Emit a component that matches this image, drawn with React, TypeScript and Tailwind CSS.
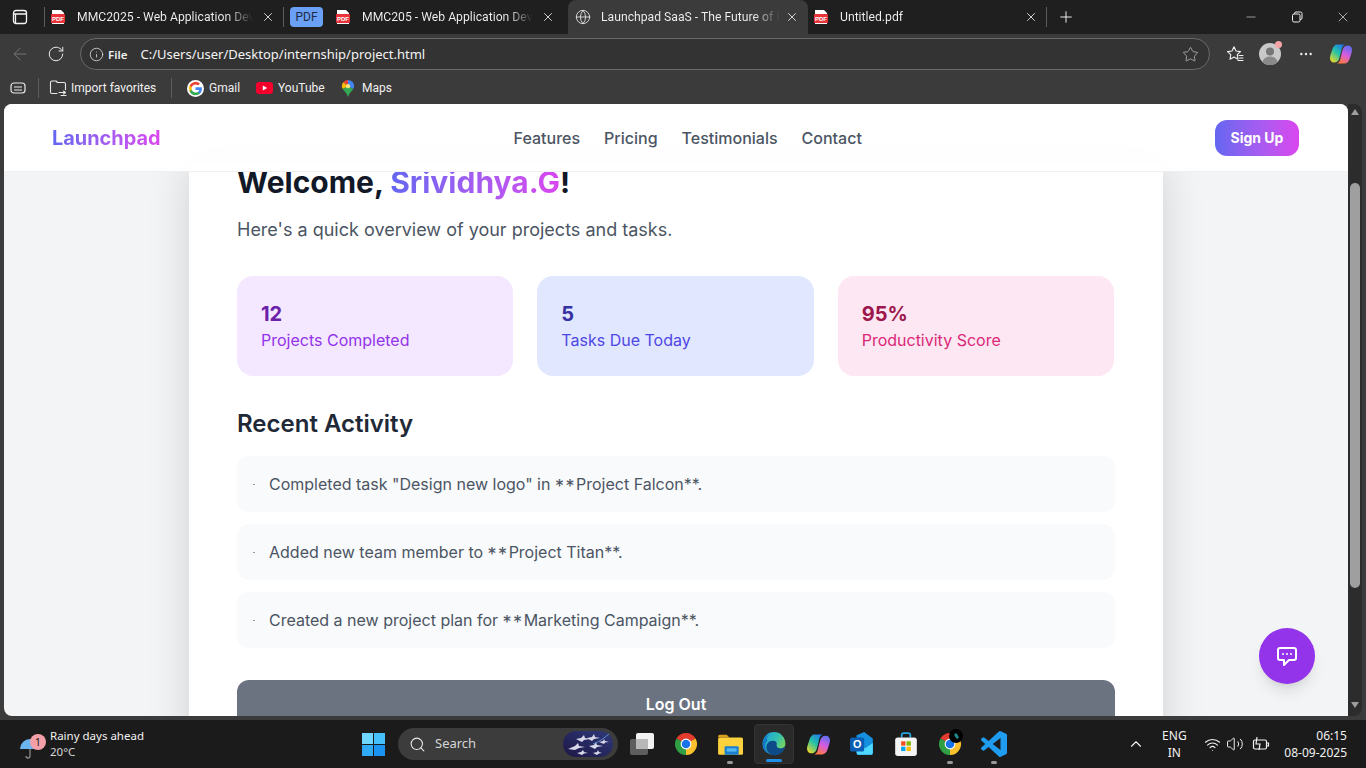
import React from 'react'
import { ArrowLeft, ChevronUp, Globe, Info, Minus, MoreHorizontal, Plus, RotateCw, Search, Star, Volume2, Wifi, X } from 'lucide-react'

const PdfIcon = () => (
  <svg width="16" height="16" viewBox="0 0 16 16" className="shrink-0">
    <path d="M2 1h9l3 3v11H2z" fill="#fff" />
    <rect x="1" y="5" width="14" height="9" rx="1" fill="#e8333a" />
    <text x="8" y="12" fontSize="6" fontWeight="700" textAnchor="middle" fill="#fff" fontFamily="Liberation Sans, sans-serif">PDF</text>
  </svg>
)

const Chrome = ({ size = 24 }: { size?: number }) => (
  <svg width={size} height={size} viewBox="0 0 24 24">
    <path d="M2.47 6.5A11 11 0 0 1 21.53 6.5L12 12Z" fill="#e33b2e" />
    <path d="M21.53 6.5A11 11 0 0 1 12 23L12 12Z" fill="#fbc02d" />
    <path d="M12 23A11 11 0 0 1 2.47 6.5L12 12Z" fill="#2f9e44" />
    <circle cx="12" cy="12" r="5.4" fill="#fff" />
    <circle cx="12" cy="12" r="4.3" fill="#1a73e8" />
  </svg>
)

const CopilotIcon = ({ size = 24 }: { size?: number }) => (
  <svg width={size} height={size} viewBox="0 0 24 24">
    <defs>
      <linearGradient id={`cpa${size}`} x1="0.9" y1="0" x2="0.2" y2="1">
        <stop offset="0" stopColor="#1f6ff0" />
        <stop offset="0.5" stopColor="#25c2a8" />
        <stop offset="1" stopColor="#e6d92a" />
      </linearGradient>
      <linearGradient id={`cpb${size}`} x1="0.7" y1="0" x2="0.3" y2="1">
        <stop offset="0" stopColor="#5f6df2" />
        <stop offset="0.5" stopColor="#d65ce0" />
        <stop offset="1" stopColor="#ff7a3c" />
      </linearGradient>
    </defs>
    <path d="M8 2.500h8c-1.800.6-2.800 2.200-3.300 4.200l-1 4.300-1.500 5.500c-.7 2.500-2.500 4-5.200 4C2.500 20.500 1 18.500 1 16c0-1 .3-2.500.8-4l1.500-4.500C4.300 4.500 6 2.500 8 2.500z" fill={`url(#cpa${size})`} />
    <path d="M16 21.500H8c1.800-.6 2.800-2.200 3.300-4.200l1-4.300 1.500-5.500c.7-2.500 2.500-4 5.200-4 2.500 0 4 2 4 4.500 0 1-.3 2.500-.8 4l-1.500 4.500c-1 3-2.700 5-5.200 5z" fill={`url(#cpb${size})`} />
  </svg>
)

const EdgeIcon = () => (
  <svg width="26" height="26" viewBox="0 0 24 24">
    <defs>
      <linearGradient id="edgeg" x1="0" y1="0" x2="1" y2="0.6">
        <stop offset="0" stopColor="#1b9de2" />
        <stop offset="0.6" stopColor="#35c1b0" />
        <stop offset="1" stopColor="#7ed957" />
      </linearGradient>
    </defs>
    <circle cx="12" cy="11.5" r="10.500" fill="url(#edgeg)" />
    <path d="M22.500 13c-.4 2-3 3.500-5.500 3-2.500-.5-3-2.500-2.500-4 .4-1.500-1-3-3.500-3-4 0-6.500 3-6 7 .4 3 3 6.500 7.500 6.500 5.500 0 9.500-4.500 10-9.500z" fill="#0c4a8a" />
    <path d="M6 9C3 11 3 17 7 20.500c-3.500-1-6-4.500-5.500-9C2 7 5 3.500 9 3 5.500 4 4.500 7 6 9z" fill="#1478c8" />
  </svg>
)

const Outlook = () => (
  <svg width="26" height="26" viewBox="0 0 24 24">
    <path d="M7 4l7-3 8 6v13a2 2 0 0 1-2 2H9a2 2 0 0 1-2-2z" fill="#1490df" />
    <path d="M7 12l8 4 7-5v9a2 2 0 0 1-2 2H9a2 2 0 0 1-2-2z" fill="#50d9ff" />
    <rect x="1" y="6" width="13" height="13" rx="1.500" fill="#0a5fb4" />
    <text x="7.500" y="16" fontSize="10" fontWeight="700" textAnchor="middle" fill="#fff" fontFamily="Liberation Sans, sans-serif">O</text>
  </svg>
)

const StoreIcon = () => (
  <svg width="26" height="26" viewBox="0 0 24 24">
    <path d="M8 6V4a2 2 0 0 1 2-2h4a2 2 0 0 1 2 2v2" fill="none" stroke="#26a5e4" strokeWidth="1.600" />
    <rect x="2" y="6" width="20" height="17" rx="2.500" fill="#f4f4f4" />
    <rect x="7.500" y="9.500" width="4" height="4" fill="#f25022" />
    <rect x="12.500" y="9.500" width="4" height="4" fill="#7fba00" />
    <rect x="7.500" y="14.500" width="4" height="4" fill="#00a4ef" />
    <rect x="12.500" y="14.500" width="4" height="4" fill="#ffb900" />
  </svg>
)

const FolderIcon = () => (
  <svg width="26" height="26" viewBox="0 0 24 24">
    <path d="M1 5a1.500 1.500 0 0 1 1.500-1.500H9l2.500 2.500H1z" fill="#d99e1a" />
    <rect x="1" y="6" width="23" height="16" rx="1.500" fill="#fbd13d" />
    <rect x="7" y="14" width="13" height="8" rx="1" fill="#1a7fd0" />
    <rect x="9" y="16" width="9" height="3" fill="#56b8f0" />
  </svg>
)

const VsCode = () => (
  <svg width="26" height="26" viewBox="0 0 24 24">
    <path fill="#1f9cf0" d="M23.150 2.587L18.210.21a1.494 1.494 0 0 0-1.705.29l-9.460 8.630-4.120-3.128a.999.999 0 0 0-1.276.057L.327 7.261A1 1 0 0 0 .326 8.740L3.899 12 .326 15.260a1 1 0 0 0 .001 1.479L1.650 17.940a.999.999 0 0 0 1.276.057l4.120-3.128 9.460 8.630a1.492 1.492 0 0 0 1.704.29l4.942-2.377A1.500 1.500 0 0 0 24 20.060V3.939a1.500 1.500 0 0 0-.85-1.352zm-5.146 14.861L10.826 12l7.178-5.448v10.896z" />
  </svg>
)

const TabItem = ({ title, width, closeClass, active, icon }: { title: string; width: number; closeClass: string; active?: boolean; icon: React.ReactNode }) => (
  <div className={`flex h-full shrink-0 items-center ${active ? 'rounded-t-lg bg-[#3b3b3b]' : ''}`} style={{ width }}>
    <div className={`flex shrink-0 ${active ? 'w-[33px] pl-[7px]' : 'w-[32px] pl-[5px]'}`}>{icon}</div>
    <span className="flex-1 overflow-hidden whitespace-nowrap bg-linear-to-r from-[#f2f2f2] from-85% to-transparent bg-clip-text text-transparent">{title}</span>
    <X size={14} strokeWidth={1.500} className={`shrink-0 text-[#e8e8e8] ${closeClass}`} />
  </div>
)

const Sep = () => <div className="h-[20px] w-px shrink-0 bg-[#5c5c5c]" />

const TabStrip = () => (
  <div className="flex h-[34px] shrink-0 items-center bg-[#1f1f1f] text-[12.200px] text-[#f2f2f2] [font-family:Roboto,sans-serif]">
    <div className="flex w-[40px] shrink-0 justify-center">
      <svg width="16" height="16" viewBox="0 0 16 16" fill="none" stroke="#f5f5f5" strokeWidth="1.300">
        <rect x="1.500" y="1.500" width="13" height="13" rx="2.500" />
        <path d="M1.500 5h13M3.500 5v9" />
      </svg>
    </div>
    <div className="ml-[4px]"><Sep /></div>
    <TabItem title="MMC2025 - Web Application Development" width={238} closeClass="ml-[8px] mr-[8px]" icon={<PdfIcon />} />
    <Sep />
    <div className="flex w-[46px] shrink-0 justify-start pl-[6px]">
      <span className="flex h-[20px] w-[33px] items-center justify-center rounded-[4px] bg-[#6aa0f5] text-[12px] text-[#1f2a44]">PDF</span>
    </div>
    <TabItem title="MMC205 - Web Application Development" width={238} closeClass="ml-[8px] mr-[13px]" icon={<PdfIcon />} />
    <TabItem title="Launchpad SaaS - The Future of Productivity" width={240} closeClass="ml-[5px] mr-[9px]" active icon={<Globe size={16} strokeWidth={1.300} className="text-[#e8e8e8]" />} />
    <TabItem title="Untitled.pdf" width={238} closeClass="ml-[8px] mr-[8px]" icon={<PdfIcon />} />
    <Sep />
    <Plus size={18} strokeWidth={1.200} className="ml-[10px] text-white" />
    <div className="ml-auto flex items-center text-[#f0f0f0]">
      <div className="flex w-[46px] justify-center"><Minus size={14} strokeWidth={1} /></div>
      <div className="flex w-[46px] justify-center">
        <svg width="12" height="12" viewBox="0 0 12 12" fill="none" stroke="currentColor">
          <rect x="1.500" y="3" width="7.500" height="8" rx="1.500" />
          <path d="M3.500 3V2.500A1.500 1.500 0 0 1 5 1h4.500A1.500 1.500 0 0 1 11 2.500V7a1.500 1.500 0 0 1-1.500 1.500H9" />
        </svg>
      </div>
      <div className="flex w-[46px] justify-center"><X size={16} strokeWidth={1} /></div>
    </div>
  </div>
)

const Toolbar = () => (
  <div className="flex h-[38px] shrink-0 items-center bg-[#3b3b3b] pt-[2px] text-white">
    <div className="flex w-[38px] justify-center pl-[2px]"><ArrowLeft size={20} strokeWidth={1.200} className="text-[#757575]" /></div>
    <div className="flex w-[36px] justify-center"><RotateCw size={18} strokeWidth={1.300} className="text-[#eeeeee]" /></div>
    <div className="ml-[6px] flex h-[32px] w-[1130px] items-center rounded-full border border-[#6a6a6a] bg-[#333333] pr-[10px] pl-[8px]">
      <Info size={15} strokeWidth={1.300} className="text-[#dddddd]" />
      <span className="ml-[4px] pt-px text-[11.500px] font-semibold text-[#f0f0f0]">File</span>
      <span className="ml-[13px] pt-px text-[13px] whitespace-nowrap text-[#f4f4f4]">C:/Users/user/Desktop/internship/project.html</span>
      <Star size={17} strokeWidth={1.100} className="ml-auto text-[#bdbdbd]" />
    </div>
    <div className="ml-[15px] flex w-[20px] justify-center">
      <svg width="18" height="18" viewBox="0 0 18 18" fill="none" stroke="#f2f2f2" strokeWidth="1.100" strokeLinejoin="round">
        <path d="M8 1.800l2 4.200 4.500.6-3.300 3.100.8 4.500L8 12l-4 2.200.8-4.500L1.500 6.600 6 6z" />
        <path d="M13 10.500h4M13.500 13h3.500M12 15.500h5" strokeLinecap="round" />
      </svg>
    </div>
    <div className="relative ml-[14px] flex h-[22px] w-[22px] items-center justify-center overflow-visible rounded-full bg-[#c9c9c9]">
      <svg width="22" height="22" viewBox="0 0 22 22">
        <circle cx="11" cy="8.500" r="4" fill="#777777" />
        <path d="M3.500 19c1-4 4-5.500 7.500-5.500s6.500 1.500 7.500 5.500a10 10 0 0 1-15 0z" fill="#8a8a8a" />
      </svg>
      <span className="absolute -top-[2px] -right-[1px] h-[7px] w-[7px] rounded-full bg-[#f4a6a6]" />
    </div>
    <MoreHorizontal size={16} strokeWidth={1.600} className="ml-[17px] text-[#f0f0f0]" />
    <div className="ml-[15px]"><CopilotIcon size={24} /></div>
  </div>
)

const Bookmarks = () => (
  <div className="flex h-[32px] shrink-0 items-center bg-[#3b3b3b] text-[12px] text-[#f0f0f0] [font-family:Roboto,sans-serif]">
    <div className="flex w-[38px] shrink-0 justify-center pr-[2px]">
      <svg width="16" height="14" viewBox="0 0 16 14" fill="none" stroke="#e8e8e8" strokeWidth="1.200">
        <rect x="1" y="2" width="14" height="10" rx="3" />
        <path d="M4 6h8M4 9h8" />
      </svg>
    </div>
    <Sep />
    <div className="ml-[10px] flex w-[108px] shrink-0 items-center gap-[4px]">
      <svg width="18" height="18" viewBox="0 0 18 18" fill="none" stroke="#e8e8e8" strokeWidth="1.100" strokeLinejoin="round" className="shrink-0">
        <path d="M1.500 13V3.500a1.500 1.500 0 0 1 1.500-1.500h4l1.500 1.500H15a1.500 1.500 0 0 1 1.500 1.500v6" />
        <path d="M1.500 13a1.500 1.500 0 0 0 1.500 1.500h5M10 13.500h6M14.500 12l2 1.500-2 1.500M12 16.500H17" strokeLinecap="round" />
      </svg>
      <span className="whitespace-nowrap">Import favorites</span>
    </div>
    <div className="ml-[14px]"><Sep /></div>
    <div className="ml-[15px] flex w-[53px] shrink-0 items-center gap-[5px]">
      <svg width="17" height="17" viewBox="0 0 24 24" className="shrink-0">
        <circle cx="12" cy="12" r="12" fill="#fff" />
        <path d="M21 12.300c0-.7-.06-1.300-.17-1.900H12v3.600h5.100a4.400 4.400 0 0 1-1.900 2.900v2.400h3c1.800-1.600 2.800-4 2.800-7z" fill="#4285f4" />
        <path d="M12 21.500c2.600 0 4.700-.8 6.200-2.300l-3-2.400c-.8.600-1.900.9-3.200.9-2.500 0-4.600-1.700-5.300-3.900H3.600v2.400A9.500 9.500 0 0 0 12 21.500z" fill="#34a853" />
        <path d="M6.700 13.800a5.700 5.700 0 0 1 0-3.600V7.800H3.600a9.500 9.500 0 0 0 0 8.400z" fill="#fbbc05" />
        <path d="M12 6.300c1.400 0 2.600.5 3.600 1.400l2.700-2.700A9.500 9.500 0 0 0 3.600 7.800l3.100 2.400c.7-2.200 2.800-3.900 5.300-3.900z" fill="#ea4335" />
      </svg>
      <span>Gmail</span>
    </div>
    <div className="ml-[16px] flex w-[68px] shrink-0 items-center gap-[5px]">
      <svg width="17" height="12" viewBox="0 0 17 12" className="shrink-0">
        <rect width="17" height="12" rx="3" fill="#f4002c" />
        <path d="M6.800 3.500l4.400 2.500-4.400 2.500z" fill="#fff" />
      </svg>
      <span>YouTube</span>
    </div>
    <div className="ml-[17px] flex items-center gap-[7px]">
      <svg width="14" height="17" viewBox="0 0 14 18" className="shrink-0">
        <path d="M7 0a6.500 6.500 0 0 1 6.500 6.500c0 1.200-.4 2.200-1 3.100L7 6.500z" fill="#4285f4" />
        <path d="M7 0A6.500 6.500 0 0 0 2 2.300L7 6.500z" fill="#ea4335" />
        <path d="M2 2.300A6.500 6.500 0 0 0 1.500 9.600L7 6.500z" fill="#fbbc05" />
        <path d="M1.500 9.600C3 12 6 14 7 18c1-4 4-6 5.500-8.400L7 6.500z" fill="#34a853" />
        <circle cx="7" cy="6.500" r="2.300" fill="#f6e27a" />
      </svg>
      <span>Maps</span>
    </div>
  </div>
)

const stats = [
  { value: '12', label: 'Projects Completed', box: 'bg-[#f3e8ff]', num: 'text-[#6b21a8]', sub: 'text-[#9333ea]' },
  { value: '5', label: 'Tasks Due Today', box: 'bg-[#e0e7ff]', num: 'text-[#3730a3]', sub: 'text-[#4f46e5]' },
  { value: '95%', label: 'Productivity Score', box: 'bg-[#fce7f3]', num: 'text-[#9d174d]', sub: 'text-[#db2777]' },
]

const activity = [
  { before: 'Completed task "Design new logo" in ', after: 'Project Falcon**.' },
  { before: 'Added new team member to ', after: 'Project Titan**.' },
  { before: 'Created a new project plan for ', after: 'Marketing Campaign**.' },
]

const Page = () => (
  <div className="relative flex min-w-0 flex-1 flex-col overflow-hidden rounded-t-lg rounded-bl-lg bg-[#f3f4f6] [font-family:Inter,sans-serif]">
    <header className="z-10 flex h-[68px] shrink-0 items-center justify-between border-b border-[#f0f0f3] bg-white/95 pr-[49px] pl-12">
      <span className="bg-linear-to-r from-[#6366f1] to-[#d946ef] bg-clip-text text-[19.900px] leading-7 font-bold text-transparent">Launchpad</span>
      <nav className="flex gap-6 font-medium text-[#4b5563]">
        <span>Features</span>
        <span>Pricing</span>
        <span>Testimonials</span>
        <span>Contact</span>
      </nav>
      <span className="w-[84px] rounded-xl bg-linear-to-r from-[#6366f1] to-[#d946ef] py-2 text-center text-[14px] leading-5 font-bold text-white">Sign Up</span>
    </header>
    <main className="mx-auto -mt-[8px] w-[974px] shrink-0 bg-white px-12 shadow-[0_0_40px_rgba(0,0,0,0.14)]">
      <h1 className="text-[30px] leading-[36px] font-bold text-[#111827]">
        Welcome, <span className="bg-linear-to-r from-[#6366f1] to-[#d946ef] bg-clip-text text-transparent">Srividhya.G</span>!
      </h1>
      <p className="mt-4 text-lg leading-7 text-[#4b5563]">Here's a quick overview of your projects and tasks.</p>
      <div className="mt-8 grid grid-cols-3 gap-6 pr-px">
        {stats.map(s => (
          <div key={s.label} className={`h-[100px] rounded-2xl p-6 ${s.box}`}>
            <div className={`text-xl leading-7 font-bold ${s.num}`}>{s.value}</div>
            <div className={`leading-6 ${s.sub}`}>{s.label}</div>
          </div>
        ))}
      </div>
      <h2 className="mt-8 text-2xl leading-8 font-semibold text-[#1f2937]">Recent Activity</h2>
      <ul className="mt-4 flex flex-col gap-3">
        {activity.map(a => (
          <li key={a.after} className="flex h-[56px] items-center rounded-xl bg-[#f9fafb] px-4 text-[#4b5563]">
            <span className="h-px w-[2px] shrink-0 bg-[#8aa0b0]" />
            <span className="ml-[14px] whitespace-pre">
              {a.before}
              <span className="relative top-[3px] text-[18px] leading-none tracking-[1.500px]">**</span>
              {a.after}
            </span>
          </li>
        ))}
      </ul>
      <button className="mt-8 mb-8 h-[48px] w-full rounded-xl bg-[#6b7280] font-semibold text-white">Log Out</button>
    </main>
    <button className="absolute right-[33px] bottom-[32px] z-20 flex h-14 w-14 items-center justify-center rounded-full bg-[#9333ea] shadow-lg">
      <svg width="24" height="24" viewBox="0 0 24 24" fill="none" stroke="#fff" strokeWidth="2" strokeLinecap="round" strokeLinejoin="round">
        <path d="M8 10h.01M12 10h.01M16 10h.01M9 16H5a2 2 0 0 1-2-2V6a2 2 0 0 1 2-2h14a2 2 0 0 1 2 2v8a2 2 0 0 1-2 2h-5l-5 5v-5z" />
      </svg>
    </button>
  </div>
)

const Scrollbar = () => (
  <div className="flex w-[14px] shrink-0 flex-col items-center rounded-tr-lg rounded-br-lg bg-[#2c2c2c] pt-[5px] pb-[8px]">
    <div className="h-0 w-0 border-x-[4px] border-b-[6px] border-x-transparent border-b-[#9e9e9e]" />
    <div className="mt-[68px] h-[405px] w-[10px] rounded-full bg-[#9f9f9f]" />
    <div className="mt-auto h-0 w-0 border-x-[4px] border-t-[6px] border-x-transparent border-t-[#9e9e9e]" />
  </div>
)

const TaskIcon = ({ children, dot, active }: { children: React.ReactNode; dot?: boolean; active?: boolean }) => (
  <div className="flex h-[48px] w-[44px] shrink-0 flex-col items-center justify-center">
    <div className={`relative flex h-[40px] w-[40px] flex-col items-center justify-center rounded-[4px] ${active ? 'border border-[#333333] bg-[#2a2a2a]' : ''}`}>
      {children}
      {active && <span className="absolute bottom-[1px] h-[3px] w-[16px] rounded-full bg-[#1e90e8]" />}
      {dot && <span className="absolute bottom-0 h-[3px] w-[6px] rounded-full bg-[#9a9a9a]" />}
    </div>
  </div>
)

const Taskbar = () => (
  <div className="flex h-[48px] shrink-0 items-center bg-[#1b1b1b] text-[#f2f2f2]">
    <div className="flex w-[351px] shrink-0 items-center pl-[20px]">
      <div className="relative h-[30px] w-[30px] shrink-0">
        <svg width="22" height="24" viewBox="0 0 22 24" className="mt-[8px]">
          <path d="M0 12a10 10 0 0 1 20 0z" fill="#6cb4ee" />
          <path d="M10 12v7a2 2 0 0 1-4 0" fill="none" stroke="#8a8a8a" strokeWidth="1.300" />
        </svg>
        <span className="absolute top-[5px] left-[10px] flex h-[16px] w-[16px] items-center justify-center rounded-full bg-[#f4a0a8] text-[11px] text-[#222222]">1</span>
      </div>
      <div className="text-[11.500px] leading-[16px]">
        <div>Rainy days ahead</div>
        <div className="text-[#d8d8d8]">20°C</div>
      </div>
    </div>
    <div className="flex h-[48px] w-[44px] shrink-0 items-center justify-center">
      <div className="grid grid-cols-2 gap-[1px]">
        <span className="h-[11px] w-[11px] bg-[#6fd6ff]" />
        <span className="h-[11px] w-[11px] bg-[#45c0fb]" />
        <span className="h-[11px] w-[11px] bg-[#30aaf5]" />
        <span className="h-[11px] w-[11px] bg-[#1a94f0]" />
      </div>
    </div>
    <div className="ml-[3px] flex h-[32px] w-[220px] shrink-0 items-center rounded-full bg-[#3c3c3c] pr-[5px] pl-[11px] text-[13px] text-[#d6d6d6]">
      <Search size={17} strokeWidth={1.500} className="text-[#e8e8e8]" />
      <span className="ml-[9px]">Search</span>
      <svg width="50" height="26" viewBox="0 0 50 26" className="ml-auto">
        <defs>
          <linearGradient id="searchpic" x1="0" y1="1" x2="1" y2="0">
            <stop offset="0" stopColor="#1d1645" />
            <stop offset="1" stopColor="#2f3a7a" />
          </linearGradient>
        </defs>
        <rect width="50" height="26" rx="13" fill="url(#searchpic)" />
        <path d="M5 18l7-3 3-3 1 3 6 1-6 1-4 2zM13 8l5-1 3-3 1 3 5 1-6 1-2 2zM24 7l5-1 2-3 1 3 5 1-6 1-2 2zM26 15l5-1 2-3 1 3 6 1-6 1-2 2zM14 22l4-1 2-2 1 2 4 1-4 .5-2 1.500zM30 22l4-1 1-2 1 2 3 1-3 .5-2 1.500zM36 11l4-1 1-2 1 2 4 1-4 .5-1 1.500z" fill="#d8d8e8" />
        <path d="M30 13C36 11 41 7 46 3" fill="none" stroke="#5f8fd0" strokeWidth="1" />
      </svg>
    </div>
    <div className="ml-[2px] flex">
      <TaskIcon>
        <svg width="25" height="22" viewBox="0 0 25 22">
          <rect x="6" y="0" width="18" height="16" rx="2" fill="#f2f2f2" />
          <rect x="0" y="6" width="18" height="16" rx="2" fill="#5e5e5e" />
          <rect x="6" y="6" width="12" height="10" fill="#b8b8b8" />
        </svg>
      </TaskIcon>
      <TaskIcon><Chrome /></TaskIcon>
      <TaskIcon dot><FolderIcon /></TaskIcon>
      <TaskIcon active><EdgeIcon /></TaskIcon>
      <TaskIcon><CopilotIcon size={25} /></TaskIcon>
      <TaskIcon><Outlook /></TaskIcon>
      <TaskIcon><StoreIcon /></TaskIcon>
      <TaskIcon dot>
        <Chrome />
        <span className="absolute top-[5px] right-[7px] flex h-[14px] w-[14px] items-center justify-center rounded-full bg-black">
          <span className="h-[6px] w-[3px] rotate-[-30deg] rounded-full bg-[#1f8a8a]" />
        </span>
      </TaskIcon>
      <TaskIcon dot><VsCode /></TaskIcon>
    </div>
    <div className="ml-auto flex items-center pr-[19px] text-[12px]">
      <ChevronUp size={18} strokeWidth={1.500} className="text-[#f2f2f2]" />
      <div className="ml-[12px] w-[34px] text-center leading-[17px]">
        <div>ENG</div>
        <div>IN</div>
      </div>
      <Wifi size={17} strokeWidth={1.500} className="ml-[13px]" />
      <Volume2 size={18} strokeWidth={1.300} className="ml-[5px]" />
      <svg width="18" height="16" viewBox="0 0 18 16" fill="none" stroke="#f2f2f2" strokeWidth="1.200" className="ml-[8px]">
        <rect x="1.500" y="4" width="13" height="9" rx="1.500" />
        <path d="M14.500 7h2v3h-2M5 1l-1 7h4l-1 6" />
      </svg>
      <div className="ml-[14px] text-right leading-[17px]">
        <div>06:15</div>
        <div>08-09-2025</div>
      </div>
    </div>
  </div>
)

export default function App() {
  return (
    <div className="flex h-screen w-full flex-col overflow-hidden bg-[#3b3b3b] [font-family:'Noto_Sans',sans-serif]">
      <TabStrip />
      <Toolbar />
      <Bookmarks />
      <div className="flex min-h-0 flex-1 px-[4px] pb-[4px]">
        <Page />
        <Scrollbar />
      </div>
      <Taskbar />
    </div>
  )
}
